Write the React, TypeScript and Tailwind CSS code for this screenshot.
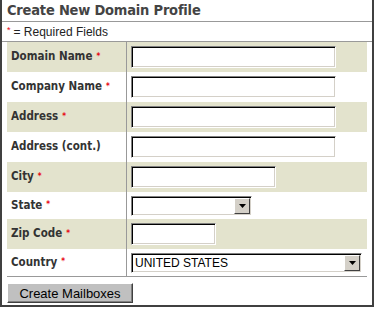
import React from "react";

type Field = {
  label: string;
  required: boolean;
  kind: "text" | "select";
  width: number;
  value?: string;
};

const fields: Field[] = [
  { label: "Domain Name", required: true, kind: "text", width: 205 },
  { label: "Company Name", required: true, kind: "text", width: 205 },
  { label: "Address", required: true, kind: "text", width: 205 },
  { label: "Address (cont.)", required: false, kind: "text", width: 205 },
  { label: "City", required: true, kind: "text", width: 145 },
  { label: "State", required: true, kind: "select", width: 121 },
  { label: "Zip Code", required: true, kind: "text", width: 85 },
  { label: "Country", required: true, kind: "select", width: 231, value: "UNITED STATES" },
];

const inset =
  "border border-t-[#808080] border-l-[#808080] border-b-white border-r-white shadow-[inset_1px_1px_0_#000,inset_-1px_-1px_0_#d4d0c8] bg-white";

const FakeSelect = ({ width, value }: { width: number; value?: string }) => (
  <div className={`${inset} flex items-center h-[20px]`} style={{ width }}>
    <span className="flex-1 pl-[3px] text-[12px] leading-none text-black font-['Liberation_Sans',sans-serif]">
      {value}
    </span>
    <div className="w-[16px] h-[16px] mr-[1px] bg-[#d4d0c8] border border-t-white border-l-white border-b-[#404040] border-r-[#404040] flex items-center justify-center">
      <svg width="7" height="4" viewBox="0 0 7 4">
        <path d="M0 0h7L3.5 4z" fill="#000" />
      </svg>
    </div>
  </div>
);

const App = () => {
  return (
    <div className="w-[374px] h-[310px] bg-white">
      <div className="h-[307px] border-l-2 border-r-2 border-b-2 border-[#404040] font-['DejaVu_Sans_Condensed','DejaVu_Sans',sans-serif]">
        <div className="h-[22px] border-b border-[#999] pl-[5px] flex items-center">
          <h1 className="text-[14.5px] font-bold text-[#444] tracking-[-0.2px]">Create New Domain Profile</h1>
        </div>
        <div className="h-[20px] border-b border-[#999] pl-[5px] flex items-center text-[12px] text-[#222] font-['Liberation_Sans',sans-serif]">
          <span className="text-red-600 text-[9px] mr-[3px] -mt-[2px]">*</span>= Required Fields
        </div>
        <div className="px-[5px]">
          <div className="border-b border-[#999]">
            {fields.map((f, i) => (
              <div
                key={f.label}
                className={`grid grid-cols-[120px_1fr] ${f.kind === "select" ? "h-[27px]" : "h-[30px]"} ${i % 2 === 0 ? "bg-[#e3e3cd]" : "bg-white"}`}
              >
                <div className="border-r border-[#999] pl-1 flex items-center text-[11.5px] font-bold text-[#333]">
                  {f.label}
                  {f.required && <span className="text-red-600 text-[8px] ml-[4px] -mt-[1px]">*</span>}
                </div>
                <div className="pl-1 flex items-center">
                  {f.kind === "text" ? (
                    <div className={`${inset} h-[22px]`} style={{ width: f.width }} />
                  ) : (
                    <FakeSelect width={f.width} value={f.value} />
                  )}
                </div>
              </div>
            ))}
          </div>
          <button className="mt-[6px] h-[20px] w-[126px] bg-[#c0c0c0] border border-t-white border-l-white border-b-[#404040] border-r-[#404040] shadow-[inset_-1px_-1px_0_#808080] text-[13px] text-black font-['Liberation_Sans',sans-serif] leading-none">
            Create Mailboxes
          </button>
        </div>
      </div>
    </div>
  );
};

export default App;
